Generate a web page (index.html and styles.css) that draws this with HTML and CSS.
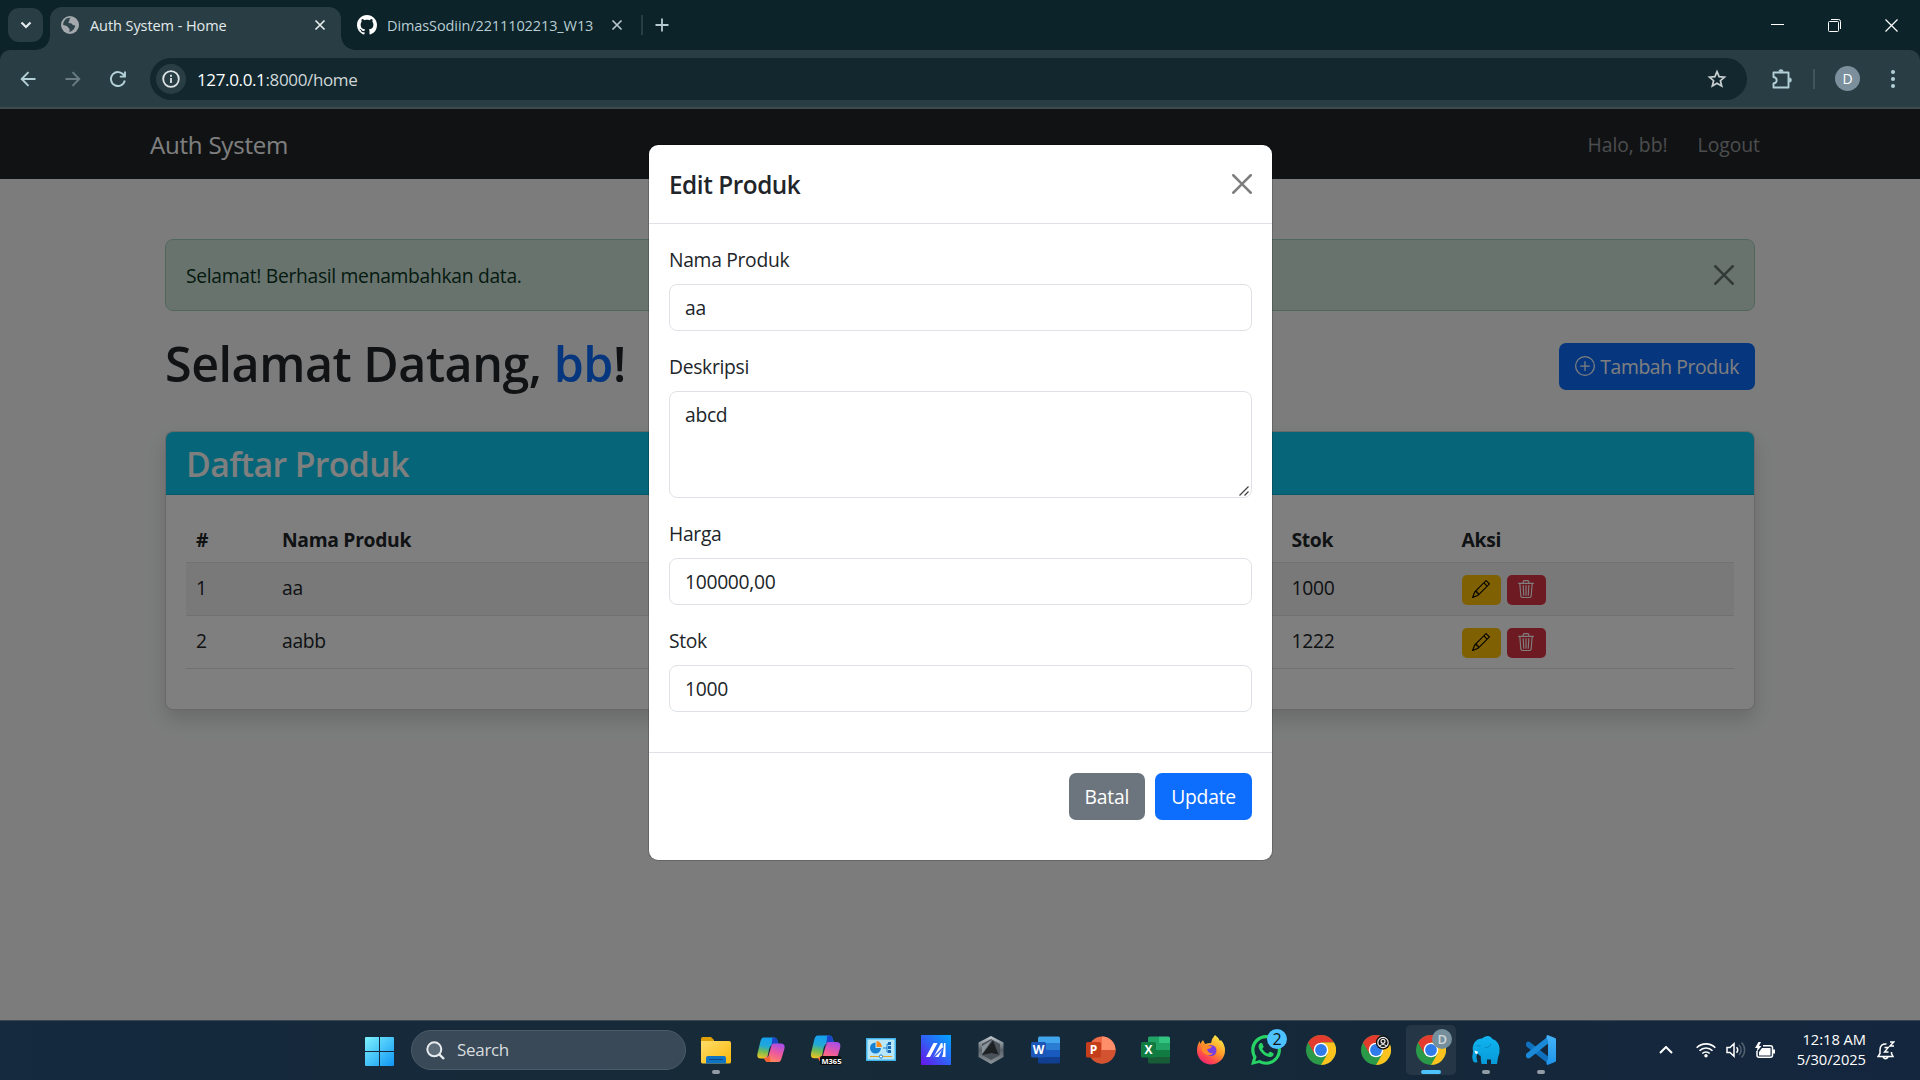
FILE: index.html
```html
<!DOCTYPE html>
<html lang="id">
<head>
<meta charset="utf-8">
<title>Auth System - Home</title>
<link rel="stylesheet" href="styles.css">
</head>
<body>
<svg width="0" height="0" class="defs" aria-hidden="true">
  <defs>
    <linearGradient id="win" x1="0" y1="0" x2="1" y2="1"><stop offset="0" stop-color="#7df1fd"/><stop offset="1" stop-color="#0f96f5"/></linearGradient>
    <linearGradient id="folder" x1="0" y1="0" x2="1" y2="1"><stop offset="0" stop-color="#ffdd6b"/><stop offset="1" stop-color="#fbb809"/></linearGradient>
    <linearGradient id="cpA" x1="0.4" y1="0" x2="0.2" y2="1"><stop offset="0" stop-color="#159ff0"/><stop offset=".4" stop-color="#22a9d8"/><stop offset=".65" stop-color="#6cbb5a"/><stop offset="1" stop-color="#f3c51f"/></linearGradient>
    <linearGradient id="cpB" x1="0.7" y1="0" x2="0.3" y2="1"><stop offset="0" stop-color="#a94ee8"/><stop offset=".5" stop-color="#ee5a9c"/><stop offset="1" stop-color="#ff8a5a"/></linearGradient>
    <linearGradient id="asus" x1="1" y1="0" x2="0" y2="1"><stop offset="0" stop-color="#00a5ff"/><stop offset=".5" stop-color="#2f62f6"/><stop offset="1" stop-color="#6a12e8"/></linearGradient>
    <linearGradient id="arm" x1="0" y1="0" x2="0" y2="1"><stop offset="0" stop-color="#c3cad0"/><stop offset=".5" stop-color="#59616a"/><stop offset="1" stop-color="#8d949b"/></linearGradient>
    <linearGradient id="fox" x1=".8" y1="0" x2=".2" y2="1"><stop offset="0" stop-color="#fff04a"/><stop offset=".45" stop-color="#ff9a28"/><stop offset=".75" stop-color="#ff4a4d"/><stop offset="1" stop-color="#e81e78"/></linearGradient>
    <linearGradient id="eleph" x1="0" y1="0" x2="0" y2="1"><stop offset="0" stop-color="#10b5f2"/><stop offset="1" stop-color="#079ad8"/></linearGradient>
    <linearGradient id="slab" x1="0" y1="0" x2="0" y2="1"><stop offset="0" stop-color="#45b3f8"/><stop offset="1" stop-color="#1e93e8"/></linearGradient>
    <g id="chrome">
      <circle cx="15" cy="15" r="15" fill="#2b9a48"/>
      <path d="M15 0A15 15 0 0 1 28 7.500L15 7.500 8.500 18.750 2 7.500A15 15 0 0 1 15 0z" fill="#e33b2e"/>
      <path d="M28 7.500A15 15 0 0 1 15 30L21.500 18.750 15 7.500z" fill="#fcc31e"/>
      <circle cx="15" cy="15" r="7.300" fill="#fff"/><circle cx="15" cy="15" r="5.900" fill="#2f7bea"/>
    </g>
    <g id="copilot">
      <path d="M7 1.500h11q2 0 3 3l1 3h-4q-3 0-4 4l-2 8q-1 3-4 3H4q-4 0-3-5L4 5q1-3.500 3-3.500z" fill="url(#cpA)"/>
      <path d="M16 1.500h2q2 0 3 3l1 3h-4q-2 0-3 2z" fill="#1d45c9"/>
      <path d="M22 26H11q-2 0-3-3l-.500-1.500q3 0 4.500-4l2-7q1-3 4-3h6q5 0 4 5l-3 10q-1 3.500-3 3.500z" fill="url(#cpB)"/>
      <path d="M7.500 22h4l1.500-3 1 7h-3q-2 0-3.500-4z" fill="#f4622f"/>
      <path d="M16.200 8.500q-1.200.8-1.700 2.700L12 20q-.4 1.200-1.200 2l1.800-9q.8-3.500 3.600-4.500z" fill="#16293a"/>
    </g>
    <g id="pencil"><path fill="#000" d="M12.146.146a.5.5 0 0 1 .708 0l3 3a.5.5 0 0 1 0 .708l-10 10a.5.5 0 0 1-.168.110l-5 2a.5.5 0 0 1-.650-.650l2-5a.5.5 0 0 1 .110-.168zM11.207 2.500 13.500 4.793 14.793 3.500 12.500 1.207zm1.586 3L10.500 3.207 4 9.707V10h.5a.5.5 0 0 1 .5.5v.5h.5a.5.5 0 0 1 .5.5v.5h.293zm-9.761 5.175-.106.106-1.528 3.821 3.821-1.528.106-.106A.5.5 0 0 1 5 12.500V12h-.5a.5.5 0 0 1-.5-.5V11h-.5a.5.5 0 0 1-.468-.325z"/></g>
    <g id="trash"><path fill="#fff" d="M6.500 1h3a.5.5 0 0 1 .5.5v1H6v-1a.5.5 0 0 1 .5-.5M11 2.500v-1A1.500 1.500 0 0 0 9.500 0h-3A1.500 1.500 0 0 0 5 1.500v1H1.500a.5.5 0 0 0 0 1h.538l.853 10.660A2 2 0 0 0 4.885 16h6.230a2 2 0 0 0 1.994-1.840l.853-10.660h.538a.5.5 0 0 0 0-1zm1.958 1-.846 10.580a1 1 0 0 1-.997.920h-6.230a1 1 0 0 1-.997-.920L3.042 3.500zm-7.487 1a.5.5 0 0 1 .528.470l.5 8.500a.5.5 0 0 1-.998.060L5 5.030a.5.5 0 0 1 .470-.530zm5.058 0a.5.5 0 0 1 .470.530l-.5 8.500a.5.5 0 1 1-.998-.060l.5-8.500a.5.5 0 0 1 .528-.470M8 4.500a.5.5 0 0 1 .5.5v8.500a.5.5 0 0 1-1 0V5a.5.5 0 0 1 .5-.5"/></g>
    <g id="xmark"><path d="M.293.293a1 1 0 0 1 1.414 0L8 6.586 14.293.293a1 1 0 1 1 1.414 1.414L9.414 8l6.293 6.293a1 1 0 0 1-1.414 1.414L8 9.414l-6.293 6.293a1 1 0 0 1-1.414-1.414L6.586 8 .293 1.707a1 1 0 0 1 0-1.414z"/></g>
  </defs>
</svg>

<header class="tabstrip">
  <div class="tabsearch"><svg width="12" height="8" viewBox="0 0 12 8" fill="none" stroke="#e4eaec" stroke-width="2.200"><path d="M1.500 1.500 6 6l4.500-4.500"/></svg></div>
  <div class="tab active">
    <svg width="18" height="18" viewBox="0 0 18 18"><circle cx="9" cy="9" r="9" fill="#a3a9ad"/><path d="M10 1.800c-1 .8-2 1-1.500 2.300.4 1-1 1-1 2.200 0 1.400 3 .6 3.700 2 .6 1.200 2 1 3 1.200-.5 3.400-2.700 6-6 6.500.3-1.500 1-2.500-.2-3.500-1-.9-1-2.200-2.500-2.600L2 8.800c.2-2.400 1.400-4.800 3.500-6.200C6.800 1.900 8.600 1.600 10 1.800z" fill="#2f444a"/></svg>
    <span>Auth System - Home</span>
    <svg class="x" width="12" height="12" viewBox="0 0 12 12" stroke="#e4eaec" stroke-width="1.700"><path d="M1.500 1.500l9 9M10.500 1.500l-9 9"/></svg>
  </div>
  <div class="tab second">
    <svg width="20" height="20" viewBox="0 0 16 16" fill="#fff"><path d="M8 0C3.580 0 0 3.580 0 8c0 3.540 2.290 6.530 5.470 7.590.4.070.550-.170.550-.380 0-.190-.010-.820-.010-1.490-2.010.370-2.530-.490-2.690-.940-.090-.230-.480-.940-.820-1.130-.280-.150-.680-.520-.010-.530.630-.010 1.080.580 1.230.820.720 1.210 1.870.870 2.330.660.070-.520.280-.870.510-1.070-1.780-.200-3.640-.890-3.640-3.950 0-.870.310-1.590.820-2.150-.080-.200-.360-1.020.080-2.120 0 0 .670-.210 2.200.820.640-.180 1.320-.270 2-.270s1.360.090 2 .270c1.530-1.040 2.200-.820 2.200-.820.440 1.100.160 1.920.080 2.120.510.560.820 1.270.820 2.150 0 3.070-1.870 3.750-3.650 3.950.290.250.540.730.540 1.480 0 1.070-.010 1.930-.010 2.200 0 .210.150.460.550.380A8.010 8.010 0 0 0 16 8c0-4.420-3.580-8-8-8"/></svg>
    <span>DimasSodiin/2211102213_W13</span>
    <svg class="x" width="12" height="12" viewBox="0 0 12 12" stroke="#b6c6cb" stroke-width="1.700"><path d="M1.500 1.500l9 9M10.500 1.500l-9 9"/></svg>
  </div>
  <i class="sep"></i>
  <svg class="plus" width="14" height="14" viewBox="0 0 14 14" stroke="#b6cbd1" stroke-width="1.800"><path d="M7 .5v13M.5 7h13"/></svg>
  <div class="winctl">
    <svg width="13" height="13" viewBox="0 0 13 13" stroke="#fff"><path d="M0 5.500h13"/></svg>
    <svg width="13" height="13" viewBox="0 0 13 13" stroke="#fff" fill="none"><rect x=".5" y="2.500" width="10" height="10" rx="1"/><path d="M3 .5h7.500a2 2 0 0 1 2 2V10"/></svg>
    <svg width="13" height="13" viewBox="0 0 13 13" stroke="#fff" stroke-width="1.200"><path d="M.5.5l12 12M12.500.5l-12 12"/></svg>
  </div>
</header>

<div class="toolbar">
  <svg width="16" height="16" viewBox="0 0 16 16" fill="none" stroke="#b3d0d8" stroke-width="1.900"><path d="M15.500 8H2M8.500 1.200 1.700 8l6.800 6.800"/></svg>
  <svg class="fwd" width="16" height="16" viewBox="0 0 16 16" fill="none" stroke="#6b7d83" stroke-width="1.900"><path d="M.5 8H14M7.500 1.200 14.300 8l-6.800 6.800"/></svg>
  <svg class="rel" width="16" height="16" viewBox="0 0 16 16" fill="none" stroke="#b3d0d8" stroke-width="1.900"><path d="M14 4.500A7 7 0 1 0 14.800 9.500M15 .5V5.600H9.800"/></svg>
  <div class="omni">
    <div class="info"><svg width="18" height="18" viewBox="0 0 18 18" fill="none" stroke="#dfe5e7" stroke-width="1.800"><circle cx="9" cy="9" r="7.800"/><path d="M9 8v5M9 4.800v1.900"/></svg></div>
    <span class="url"><b>127.0.0.1</b>:8000/home</span>
    <svg class="star" width="20" height="20" viewBox="0 0 20 20" fill="none" stroke="#c9cfd1" stroke-width="1.700"><path d="M10 2.600l2.100 5 5.400.500-4.100 3.600 1.300 5.300L10 14.200 5.300 17l1.300-5.300-4.100-3.600 5.400-.500z"/></svg>
  </div>
  <svg class="puzzle" width="22" height="22" viewBox="0 0 22 22" fill="none" stroke="#b3d0d8" stroke-width="1.900" stroke-linejoin="round"><path d="M2.500 4.500H17.500V19.500H2.500V15.500q3.200-.500 3.200-3.200T2.500 9z"/><path d="M7.500 3.800a2.500 2.500 0 0 1 5 0zM18.200 9.500a2.500 2.500 0 0 1 0 5z" fill="#b3d0d8" stroke="none"/></svg>
  <i class="sep"></i>
  <span class="avatar">D</span>
  <svg class="dots" width="4" height="18" viewBox="0 0 4 18" fill="#b3d0d8"><circle cx="2" cy="2" r="2"/><circle cx="2" cy="9" r="2"/><circle cx="2" cy="16" r="2"/></svg>
</div>

<section class="viewport">
  <nav class="navbar">
    <span class="brand">Auth System</span>
    <span class="navtext">Halo, bb!</span>
    <span class="navtext">Logout</span>
  </nav>
  <main class="container">
    <div class="alert">
      <span>Selamat! Berhasil menambahkan data.</span>
      <svg width="20" height="20" viewBox="0 0 16 16" fill="#000" opacity=".5"><use href="#xmark"/></svg>
    </div>
    <div class="headline">
      <h1>Selamat Datang, <span>bb</span>!</h1>
      <button class="btn primary add"><svg width="20" height="20" viewBox="0 0 16 16" fill="#fff"><path d="M8 15A7 7 0 1 1 8 1a7 7 0 0 1 0 14m0 1A8 8 0 1 0 8 0a8 8 0 0 0 0 16"/><path d="M8 4a.5.5 0 0 1 .5.5v3h3a.5.5 0 0 1 0 1h-3v3a.5.5 0 0 1-1 0v-3h-3a.5.5 0 0 1 0-1h3v-3A.5.5 0 0 1 8 4"/></svg><span>Tambah Produk</span></button>
    </div>
    <div class="card">
      <div class="card-header"><h3>Daftar Produk</h3></div>
      <div class="card-body">
        <div class="row head"><span>#</span><span>Nama Produk</span><span>Stok</span><span>Aksi</span></div>
        <div class="row odd"><span>1</span><span>aa</span><span>1000</span><span class="acts"><i class="sm edit"><svg width="18" height="18" viewBox="0 0 16 16"><use href="#pencil"/></svg></i><i class="sm del"><svg width="18" height="18" viewBox="0 0 16 16"><use href="#trash"/></svg></i></span></div>
        <div class="row"><span>2</span><span>aabb</span><span>1222</span><span class="acts"><i class="sm edit"><svg width="18" height="18" viewBox="0 0 16 16"><use href="#pencil"/></svg></i><i class="sm del"><svg width="18" height="18" viewBox="0 0 16 16"><use href="#trash"/></svg></i></span></div>
      </div>
    </div>
  </main>
  <div class="backdrop">
    <div class="modal">
      <div class="modal-header"><h5>Edit Produk</h5><svg width="20" height="20" viewBox="0 0 16 16" fill="#000" opacity=".5"><use href="#xmark"/></svg></div>
      <div class="modal-body">
        <label>Nama Produk</label><div class="field">aa</div>
        <label>Deskripsi</label><div class="field area">abcd<svg class="grip" width="10" height="10" viewBox="0 0 10 10" stroke="#444" stroke-width="1.300"><path d="M.5 9.500l9-9M5.500 9.500l4-4"/></svg></div>
        <label>Harga</label><div class="field">100000,00</div>
        <label>Stok</label><div class="field">1000</div>
      </div>
      <div class="modal-footer"><button class="btn secondary"><span>Batal</span></button><button class="btn primary"><span>Update</span></button></div>
    </div>
  </div>
</section>

<footer class="taskbar">
  <svg class="start" width="29" height="29" viewBox="0 0 29 29"><path d="M0 1q0-1 1-1h13v14H0zM15 0h13q1 0 1 1v13H15zM0 15h14v14H1q-1 0-1-1zM15 15h14v13q0 1-1 1H15z" fill="url(#win)"/></svg>
  <div class="search"><svg width="19" height="19" viewBox="0 0 19 19" fill="#5d6c79" stroke="#e8ecef" stroke-width="2"><circle cx="8.300" cy="8.300" r="7"/><path d="M13.300 13.300l4.700 4.700" stroke-width="2.400"/></svg><span>Search</span></div>
  <div class="apps">
    <div class="app"><svg width="30" height="30" viewBox="0 0 30 30"><path d="M0 4q0-2 2-2h8l3 3v4H0z" fill="#e0a008"/><path d="M0 6h28q2 0 2 2v19q0 1.500-2 1.500H2q-2 0-2-1.500z" fill="url(#folder)"/><path d="M5 28.500V23q0-2 2-2h16q2 0 2 2v5.500z" fill="#1173c4"/><path d="M8 24.500h14" stroke="#0a4a86"/></svg><u></u></div>
    <div class="app"><svg width="30" height="30" viewBox="-0.500 -1 30 30"><use href="#copilot"/></svg></div>
    <div class="app"><svg width="32" height="32" viewBox="0 0 32 32"><use href="#copilot" transform="scale(1.080)"/><rect x="10" y="22" width="21" height="9" rx="2" fill="#0b0b0b"/><text x="11.500" y="29.500" class="m365">M365</text></svg></div>
    <div class="app"><svg width="30" height="30" viewBox="0 0 30 30"><rect y="3" width="30" height="23" fill="#3fb4ec"/><rect x="1.500" y="4.500" width="27" height="20" fill="#b9e7fa"/><path d="M9.500 13V7.500A5.500 5.500 0 1 0 15 13z" fill="#1780d0"/><path d="M10.500 12V6a6 6 0 0 1 5.500 6z" fill="#f78d1e"/><path d="M17 13h4M21 9h4M21 9v8h4" stroke="#1780d0" fill="none"/><path d="M22 7h3v3h-3zM22 11h3v3h-3zM22 15h3v3h-3z" fill="#1565b0"/><path d="M4 21.500h22" stroke="#e8a020"/><circle cx="15" cy="21.500" r="1.600" fill="#fff" stroke="#1780d0"/></svg></div>
    <div class="app"><svg width="30" height="30" viewBox="0 0 30 30"><rect width="30" height="30" fill="url(#asus)"/><path d="M5 22L12.500 8h4L9 22zM12.500 22L20 8h1.500L22 13l-4.500 9zM23 8h1.500v14H21l1-3z" fill="#fff"/><path d="M13 22l9-9" stroke="#3f5ff0" stroke-width="1.500"/></svg></div>
    <div class="app"><svg width="30" height="30" viewBox="0 0 30 30"><path d="M15 1l12.500 6.500v14.500L15 29 2.500 22V7.500z" fill="url(#arm)"/><path d="M15 4l9 5v11l-9 5-9-5V9z" fill="#4a5158"/><path d="M17 5.500l5.500 14-7-1.500L6 20z" fill="#1d2124"/><path d="M16 5L6 11v8z" fill="#8a939b"/></svg></div>
    <div class="app"><svg width="30" height="30" viewBox="0 0 30 30"><path d="M8 1.500h19.500Q29 1.500 29 3v5H7V3z" fill="#41a5ee"/><path d="M7 8h22v7H7z" fill="#2b7cd3"/><path d="M7 15h22v7H7z" fill="#185abd"/><path d="M7 22h22v5q0 1.500-1.500 1.500h-19Q7 28.500 7 27z" fill="#103f91"/><rect y="7" width="15" height="15.500" rx="1.500" fill="#1c56b8"/><text x="7.500" y="19" class="ltr">W</text></svg></div>
    <div class="app"><svg width="30" height="30" viewBox="0 0 30 30"><circle cx="16" cy="15" r="13.500" fill="#ed6c47"/><path d="M16 1.500A13.500 13.500 0 0 1 29.500 15H16z" fill="#ff8f6b"/><path d="M2.500 15h27a13.500 13.500 0 0 1-27 0z" fill="#d35230"/><rect y="7" width="15" height="15.500" rx="1.500" fill="#c43e1c"/><text x="7.500" y="19" class="ltr">P</text></svg></div>
    <div class="app"><svg width="30" height="30" viewBox="0 0 30 30"><path d="M8.500 1.500H18V15H7V3q0-1.500 1.500-1.500z" fill="#21a366"/><path d="M18 1.500h9.500Q29 1.500 29 3v5H18z" fill="#33c481"/><path d="M18 8h11v7H18z" fill="#21a366"/><path d="M7 15h11v7H7z" fill="#107c41"/><path d="M18 15h11v7H18z" fill="#107c41"/><path d="M7 22h22v5q0 1.500-1.500 1.500h-19Q7 28.500 7 27z" fill="#185c37"/><rect y="7" width="15" height="15.500" rx="1.500" fill="#107c41"/><text x="7.500" y="19" class="ltr">X</text></svg></div>
    <div class="app"><svg width="30" height="30" viewBox="0 0 30 30"><path d="M19 0q4 3 5 6l1-1q4 5 4 10a14 14 0 0 1-28 1Q1 9 4 6v3l3-4 2 4q3-1 6-1 1-5 4-8z" fill="url(#fox)"/><circle cx="15" cy="15.500" r="5.500" fill="#7a3fe0"/><path d="M6 9q4 0 6 2h4q-1 3-5 3 1 5 6 4-3 4-8 1T6 9z" fill="#ff8a2a"/></svg></div>
    <div class="app"><svg width="30" height="30" viewBox="0 0 24 24"><path fill="#28d366" d="M17.500 14.400c-.3-.15-1.760-.87-2.030-.97-.27-.1-.47-.15-.67.15-.2.300-.77.970-.94 1.160-.17.200-.35.220-.64.080-.3-.15-1.260-.46-2.390-1.480-.88-.79-1.480-1.760-1.650-2.060-.17-.3-.02-.46.130-.6.130-.13.300-.35.440-.52.150-.17.200-.3.300-.5.100-.2.050-.37-.02-.52-.08-.15-.67-1.610-.92-2.210-.24-.58-.49-.5-.67-.51h-.57c-.2 0-.52.070-.79.370-.27.300-1.040 1.020-1.040 2.480s1.070 2.880 1.210 3.070c.15.200 2.100 3.200 5.080 4.490.71.300 1.260.49 1.690.62.710.23 1.360.2 1.870.12.570-.09 1.760-.72 2.010-1.410.25-.7.250-1.290.17-1.410-.07-.13-.27-.2-.57-.35M12.050 0C5.500 0 .16 5.330.16 11.890c0 2.100.55 4.140 1.590 5.950L.06 24l6.300-1.650a11.880 11.880 0 0 0 5.690 1.450c6.550 0 11.890-5.340 11.890-11.900A11.820 11.820 0 0 0 12.050 0m0 21.300a9.300 9.300 0 0 1-4.900-1.300l-3.700 1 1-3.600a9.400 9.400 0 0 1-1.700-5.500 9.350 9.350 0 1 1 9.300 9.400"/></svg><span class="badge">2</span></div>
    <div class="app"><svg width="30" height="30" viewBox="0 0 30 30"><use href="#chrome"/></svg></div>
    <div class="app"><svg width="30" height="30" viewBox="0 0 30 30"><use href="#chrome"/><circle cx="22" cy="7.500" r="7.200" fill="#111"/><g fill="none" stroke="#eee" stroke-width="1.200"><circle cx="22" cy="7.500" r="5.200"/><circle cx="22" cy="6.300" r="2"/><path d="M18.500 11q3.500-3 7 0"/></g></svg></div>
    <div class="app on"><svg width="30" height="30" viewBox="0 0 30 30"><use href="#chrome"/></svg><span class="badge d">D</span><u></u></div>
    <div class="app"><svg width="30" height="30" viewBox="0 0 30 30"><path d="M11 3.500q3-3 6.500-2.500 2.500.3 4 3 6 2 7 9 .6 5-1.500 9.500L26 29h-6v-4.500h-4V29h-5.500q-.8-4-.8-8-2-.7-3-2.500-1.500 1.500-1.200 4 .3 2 1 4.500-3 1.500-4.500-1Q.5 22 2 17q-1-6 1.500-9.500Q6.500 3.500 11 3.500z" fill="url(#eleph)"/><path d="M5.500 10.500q2 1.200 4 0M14 12.500q5 .5 6-4" stroke="#078ac2" fill="none"/><path d="M3.500 15.500l3.500 1.200q.2 2-1.500 2.300-2-.8-2-3.500z" fill="#fff"/></svg><u></u></div>
    <div class="app"><svg width="30" height="30" viewBox="0 0 30 30"><path d="M2.500 9.500L22 25" stroke="#0f71be" stroke-width="5.500" stroke-linecap="round"/><path d="M2.500 20.500L22 5" stroke="#1a8ad8" stroke-width="5.500" stroke-linecap="round"/><path d="M21.500 0L29 3q1 .4 1 1.500v21q0 1.100-1 1.500l-7.500 3q-1.500-.5-1-2.500L22 24V6l-1.500-3.500q-.5-2 1-2.500z" fill="url(#slab)"/></svg><u></u></div>
  </div>
  <div class="tray">
    <svg class="chev" width="14" height="8" viewBox="0 0 14 8" fill="none" stroke="#fff" stroke-width="2"><path d="M1 7l6-6 6 6"/></svg>
    <svg class="wifi" width="20" height="16" viewBox="0 0 20 16" fill="none" stroke="#fff" stroke-width="1.600"><path d="M.7 5.800a13 13 0 0 1 18.600 0M3.500 8.800a9 9 0 0 1 13 0M6.300 11.500a5.300 5.300 0 0 1 7.400 0"/><circle cx="10" cy="13.700" r="1.700" fill="#fff" stroke="none"/></svg>
    <svg class="vol" width="20" height="18" viewBox="0 0 20 18" fill="none" stroke="#fff" stroke-width="1.500"><path d="M1 6.500h3L8 2.800v12.400L4 11.500H1zM10.500 6.300a4 4 0 0 1 0 5.400"/><path d="M13 4a7 7 0 0 1 0 10M15.500 1.500a10.500 10.500 0 0 1 0 15" stroke="#53616f"/></svg>
    <svg class="bat" width="21" height="17" viewBox="0 0 21 17" fill="none" stroke="#fff" stroke-width="1.500"><path d="M8 3.800h7.500a2 2 0 0 1 2 2v7.400a2 2 0 0 1-2 2H4a2 2 0 0 1-2-2V9"/><path d="M7 6h8.500v7.500H4V10z" fill="#fff" stroke="none"/><path d="M18 7.500h2v4h-2z" fill="#fff" stroke="none"/><path d="M3.500 0L0 6h2.500L1.500 10 6.500 4H4l2-4z" fill="#fff" stroke="none"/></svg>
    <div class="clock"><span>12:18 AM</span><span>5/30/2025</span></div>
    <svg class="bell" width="18" height="19" viewBox="0 0 18 19" fill="none" stroke="#fff" stroke-width="1.500"><path d="M9.500 3Q3 2.500 3 9v3.500L1 15.500h15l-1.500-3V11M6 16q2.500 3.500 5 0"/><path d="M7.500 6.500h3.700l-3.700 4.500h4M13 1h3.700L13 5h4" stroke-width="1.400"/></svg>
  </div>
</footer>
</body>
</html>
```
FILE: styles.css
```css
* { box-sizing: border-box; }
body { margin: 0; width: 1920px; height: 1080px; overflow: hidden; display: flex; flex-direction: column; font: 19.300px/30px "Open Sans", "Noto Sans", sans-serif; letter-spacing: -.31px; color: #212529; }
svg { display: block; flex: none; }
.defs { position: absolute; }
i { font-style: normal; }
h1, h3, h5 { margin: 0; font-weight: 600; line-height: 1.2; letter-spacing: -.018em; }

.tabstrip { height: 50px; background: #0b2329; display: flex; align-items: center; padding-left: 8px; flex: none; }
.tabsearch { width: 35px; height: 34px; border-radius: 11px; background: #293e44; display: grid; place-items: center; margin-right: 7px; }
.tab { display: flex; align-items: center; font-size: 14.500px; line-height: 20px; letter-spacing: -.07px; color: #b9cdd3; white-space: nowrap; }
.tab span { padding-top: 1px; }
.tab .x { margin-left: auto; }
.active { position: relative; width: 291px; height: 43px; align-self: flex-end; background: #293e44; border-radius: 12px 12px 0 0; padding: 0 15px 7px 11px; color: #e4eaec; gap: 11px; }
.active::before, .active::after { content: ""; position: absolute; bottom: 0; width: 14px; height: 14px; }
.active::before { left: -14px; background: radial-gradient(circle at 0 0, transparent 13.500px, #293e44 14px); }
.active::after { right: -14px; background: radial-gradient(circle at 100% 0, transparent 13.500px, #293e44 14px); }
.second { width: 300px; padding: 0 18px 0 16px; gap: 10px; letter-spacing: -.1px; }
.tabstrip .sep { width: 2px; height: 20px; background: #293e44; }
.plus { margin-left: 12px; }
.winctl { display: flex; gap: 44px; margin-left: auto; margin-right: 22px; }

.toolbar { height: 59px; flex: none; background: #293e44; border-bottom: 2px solid #3d4a4e; display: flex; align-items: center; padding-left: 20px; border-radius: 10px 10px 0 0; box-shadow: 0 -10px 0 0 #0b2329; z-index: -1; position: relative; }
.fwd { margin-left: 29px; }
.rel { margin-left: 29px; }
.omni { margin-left: 24px; width: 1597px; height: 42px; border-radius: 21px; background: #12282e; display: flex; align-items: center; padding: 0 20px 0 6px; }
.info { width: 30px; height: 30px; border-radius: 50%; background: #293e44; display: grid; place-items: center; }
.url { margin-left: 11px; padding-top: 2px; font-size: 17px; letter-spacing: -.36px; color: #cfd6d8; }
.url b { font-weight: 400; color: #fff; }
.star { margin-left: auto; }
.puzzle { margin-left: 24px; }
.toolbar .sep { width: 2px; height: 20px; background: #40565d; margin-left: 20px; }
.avatar { width: 25px; height: 25px; border-radius: 50%; background: #7b909c; color: #fff; font-size: 14px; line-height: 25px; text-align: center; margin-left: 20px; }
.dots { margin-left: 31px; }

.viewport { position: relative; height: 911px; flex: none; background: #f8f9fa; overflow: hidden; }
.navbar { height: 70px; background: #212529; display: flex; align-items: center; padding: 1px 160px 0 150px; gap: 30px; }
.brand { font-size: 24.100px; letter-spacing: -.25px; color: #fff; margin-right: auto; }
.navtext { color: rgba(255, 255, 255, .55); letter-spacing: 0; padding-top: 1px; }
.container { padding: 60px 165px 0; }
.alert { height: 72px; border: 1px solid #a3cfbb; border-radius: 8px; background: #d1e7dd; color: #0a3622; display: flex; align-items: center; justify-content: space-between; padding: 1px 20px 0; }
.alert svg { margin-top: -2px; }
.headline { height: 70px; margin: 20px 0 30px; display: flex; align-items: center; justify-content: space-between; }
h1 { font-size: 48.400px; letter-spacing: -.46px; padding-bottom: 6px; color: #212529; }
h1 span { color: #0d6efd; }
.btn { height: 47px; border: 0; border-radius: 7px; padding: 0 16px; font: inherit; letter-spacing: -.2px; color: #fff; display: flex; align-items: center; gap: 5px; white-space: nowrap; }
.btn span { padding-top: 1px; }
.add { letter-spacing: -.36px; }
.primary { background: #0d6efd; }
.secondary { background: #6c757d; }
.card { height: 279px; background: #fff; border: 1px solid rgba(0, 0, 0, .175); border-radius: 8px; box-shadow: 0 10px 20px rgba(0, 0, 0, .15); }
.card-header { height: 63px; padding: 12px 20px; background: #0dcaf0; border-bottom: 1px solid #0bb0d2; border-radius: 7px 7px 0 0; color: #fff; }
h3 { font-size: 33.800px; }
.card-body { padding: 20px; }
.row { height: 53px; display: grid; grid-template-columns: 86px 1009.500px 170px 1fr; align-items: center; border-bottom: 1px solid #dee2e6; padding-bottom: 2px; }
.row > span { padding-left: 10px; }
.row.head { height: 48px; font-weight: 700; padding: 2px 0 0; }
.odd { background: #f2f2f2; }
.row .acts { display: flex; gap: 6px; padding-top: 3px; }
.sm { width: 39px; height: 30px; border-radius: 5px; display: grid; place-items: center; padding-bottom: 2px; }
.edit { background: #ffc107; }
.del { background: #dc3545; }

.backdrop { position: absolute; inset: 0; background: rgba(0, 0, 0, .5); padding: 35px 0 0 1px; }
.modal { width: 625px; height: 717px; margin: 0 auto; background: #fff; background-clip: padding-box; border: 1px solid rgba(0, 0, 0, .175); border-radius: 10px; }
.modal-header { height: 79px; border-bottom: 1px solid #dee2e6; display: flex; align-items: center; justify-content: space-between; padding: 0 20px; }
h5 { font-size: 24.300px; padding-top: 2px; }
.modal-body { padding: 20px; height: 528px; }
label { display: block; height: 30px; margin-bottom: 10px; padding-top: 1px; }
.field { height: 47px; border: 1px solid #dee2e6; border-radius: 8px; padding: 8px 15px; margin-bottom: 20px; }
.area { position: relative; height: 107px; }
.grip { position: absolute; right: 2px; bottom: 1px; }
.modal-footer { border-top: 1px solid #dee2e6; padding: 20px; display: flex; justify-content: flex-end; gap: 10px; }

.taskbar { height: 60px; flex: none; background: linear-gradient(90deg, #15293f, #162a37 40%, #15283a 75%, #14263e); border-top: 1px solid #39464f; display: flex; align-items: center; padding: 0 0 1px 365px; color: #fff; }
.start { margin-top: 2px; }
.search { margin-left: 17px; width: 275px; height: 40px; border-radius: 20px; background: #394957; border: 1px solid #4c5b68; display: flex; align-items: center; padding-left: 14px; gap: 12px; font-size: 17px; color: #d8dcdf; }
.apps { display: flex; gap: 5px; margin-left: 5px; }
.app { position: relative; width: 50px; height: 50px; border-radius: 5px; display: grid; place-items: center; }
.app.on { background: #253747; }
.app u { position: absolute; bottom: 1px; left: 21px; width: 8px; height: 4px; border-radius: 2px; background: #929ca5; }
.app.on u { left: 15px; width: 20px; background: #4cc2ff; }
.badge { position: absolute; top: 4px; right: 4px; width: 20px; height: 20px; border-radius: 50%; background: #4cc2ff; color: #111; font-size: 16px; line-height: 20px; text-align: center; }
.badge.d { background: #75909c; color: #cfd8dc; font-weight: 600; font-size: 13px; }
.ltr { font: 700 12px "Open Sans", sans-serif; fill: #fff; text-anchor: middle; letter-spacing: 0; }
.m365 { font: 700 7.500px "Open Sans", sans-serif; fill: #fff; letter-spacing: 0; }
.tray { margin-left: auto; display: flex; align-items: center; padding-right: 25px; }
.wifi { margin-left: 23px; }
.vol { margin-left: 10px; }
.bat { margin-left: 9px; }
.clock { display: flex; flex-direction: column; align-items: flex-end; font-size: 14.700px; letter-spacing: -.03px; line-height: 20px; width: 80px; margin: -2px 0 0 10px; }
.bell { margin-left: 11px; }
```
